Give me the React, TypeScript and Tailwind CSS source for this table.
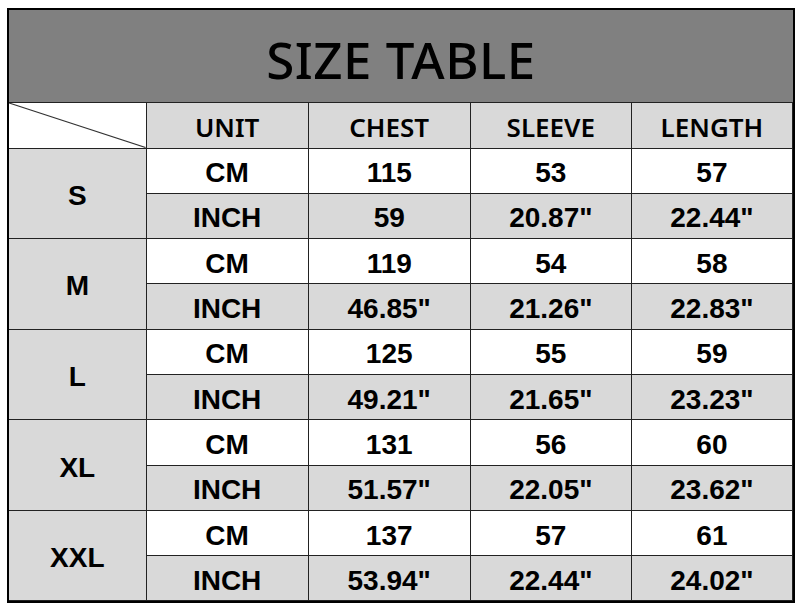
import React from 'react';

interface SizeRow {
  size: string;
  cm: [string, string, string];
  inch: [string, string, string];
}

const ROWS: SizeRow[] = [
  { size: 'S', cm: ['115', '53', '57'], inch: ['59', '20.87"', '22.44"'] },
  { size: 'M', cm: ['119', '54', '58'], inch: ['46.85"', '21.26"', '22.83"'] },
  { size: 'L', cm: ['125', '55', '59'], inch: ['49.21"', '21.65"', '23.23"'] },
  { size: 'XL', cm: ['131', '56', '60'], inch: ['51.57"', '22.05"', '23.62"'] },
  { size: 'XXL', cm: ['137', '57', '61'], inch: ['53.94"', '22.44"', '24.02"'] },
];

const HEADERS = ['UNIT', 'CHEST', 'SLEEVE', 'LENGTH'];

const dataFont = "font-['Liberation_Sans',Arial,sans-serif] font-bold text-[28px] leading-[32px] pt-[5px] pb-0 px-0";
const headFont = "font-['Noto_Sans',sans-serif] font-semibold text-[26px] leading-[32px] pt-[4px] pb-0 px-0";

export default function App() {
  return (
    <div className="w-[800px] h-[610px] bg-white pt-[8px] pl-[7px]">
      <div className="w-[788px] border-[2.5px] border-black bg-white">
        <div className="h-[93px] bg-[#808080] border-b border-[#222] flex items-center justify-center">
          <span className="font-['Noto_Sans',sans-serif] font-medium text-[51px] leading-[60px] text-black tracking-[0.5px] pt-[6px]">
            SIZE TABLE
          </span>
        </div>
        <table className="w-full table-fixed border-collapse text-black">
          <colgroup>
            <col className="w-[137px]" />
            <col className="w-[162px]" />
            <col className="w-[162px]" />
            <col className="w-[161px]" />
            <col className="w-[161px]" />
          </colgroup>
          <tbody>
            <tr className="h-[45px]">
              <td className="relative border-r border-[#222] bg-white p-0">
                <svg className="absolute inset-0 w-full h-full" viewBox="0 0 137 45" preserveAspectRatio="none">
                  <line x1="0" y1="0" x2="137" y2="45" stroke="#333" strokeWidth="1.2" />
                </svg>
              </td>
              {HEADERS.map((h) => (
                <td key={h} className={`border border-[#222] border-t-0 bg-[#d9d9d9] text-center ${headFont}`}>
                  {h}
                </td>
              ))}
            </tr>
            {ROWS.map((row) => (
              <React.Fragment key={row.size}>
                <tr className="h-[45.3px]">
                  <td rowSpan={2} className={`border border-[#222] border-l-0 bg-[#d9d9d9] text-center ${dataFont}`}>
                    {row.size}
                  </td>
                  <td className={`border border-[#222] bg-white text-center ${dataFont}`}>CM</td>
                  {row.cm.map((v, i) => (
                    <td key={i} className={`border border-[#222] bg-white text-center ${dataFont}`}>
                      {v}
                    </td>
                  ))}
                </tr>
                <tr className="h-[45.3px]">
                  <td className={`border border-[#222] bg-[#d9d9d9] text-center ${dataFont}`}>INCH</td>
                  {row.inch.map((v, i) => (
                    <td key={i} className={`border border-[#222] bg-[#d9d9d9] text-center ${dataFont}`}>
                      {v}
                    </td>
                  ))}
                </tr>
              </React.Fragment>
            ))}
          </tbody>
        </table>
      </div>
    </div>
  );
}
